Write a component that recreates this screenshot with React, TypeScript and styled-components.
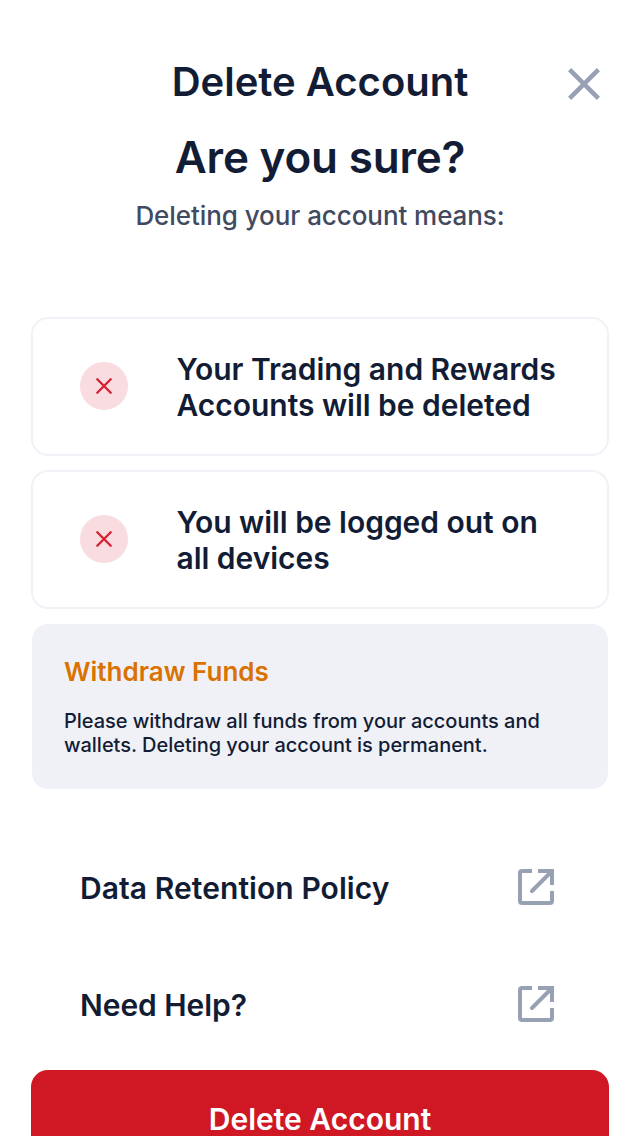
import React from "react";
import styled, { createGlobalStyle } from "styled-components";

const Global = createGlobalStyle`
  * { box-sizing: border-box; }
  body { margin: 0; background: #fff; overflow: hidden; }
`;

const Screen = styled.main`
  width: 640px;
  height: 1136px;
  overflow: hidden;
  padding: 59px 31px 0;
  background: #fff;
  color: #121d35;
  font-family: Inter, sans-serif;
  display: flex;
  flex-direction: column;
  > * { flex-shrink: 0; }
`;

const Header = styled.header`
  display: grid;
  grid-template-columns: 50px 1fr 50px;
  align-items: center;
  height: 46px;
`;

const Title = styled.h1`
  grid-column: 2;
  margin: 0;
  text-align: center;
  font-size: 40px;
  line-height: 46px;
  font-weight: 600;
  white-space: nowrap;
`;

const CloseButton = styled.button`
  border: 0;
  padding: 0;
  background: none;
  width: 32px;
  height: 32px;
  margin: 4px 0 0 9px;
  color: #98a1b3;
  svg { display: block; }
`;

const Question = styled.h2`
  margin: 25px 0 0;
  text-align: center;
  font-size: 44px;
  line-height: 54px;
  font-weight: 600;
  letter-spacing: -0.2px;
`;

const Lead = styled.p`
  margin: 16px 0 0;
  text-align: center;
  font-size: 26px;
  line-height: 32px;
  font-weight: 450;
  letter-spacing: -0.07px;
  color: #414a5f;
`;

const Cards = styled.section`
  margin-top: 85px;
  display: flex;
  flex-direction: column;
  gap: 14px;
`;

const Card = styled.div`
  display: flex;
  align-items: center;
  height: 139px;
  padding: 0 47px;
  gap: 48.5px;
  border: 2px solid #f1f1f7;
  border-radius: 17px;
`;

const Badge = styled.span`
  flex: none;
  display: grid;
  place-items: center;
  width: 48px;
  height: 48px;
  margin-bottom: 1px;
  border-radius: 50%;
  background: #f9dce0;
  color: #d71f32;
`;

const CardText = styled.p`
  margin: 0;
  font-size: 30px;
  line-height: 36px;
  font-weight: 600;
  letter-spacing: -0.03px;
  white-space: nowrap;
`;

const Notice = styled.section`
  margin: 15px 1px 0;
  height: 165px;
  padding: 32px 32px 0;
  border-radius: 16px;
  background: #f0f1f7;
`;

const NoticeTitle = styled.h3`
  margin: 0;
  font-size: 26px;
  line-height: 32px;
  font-weight: 600;
  color: #d97200;
`;

const NoticeText = styled.p`
  margin: 21px 0 0;
  font-size: 20px;
  line-height: 24px;
  font-weight: 500;
  letter-spacing: -0.03px;
  white-space: nowrap;
`;

const Links = styled.nav`
  margin-top: 40px;
  display: flex;
  flex-direction: column;
`;

const LinkRow = styled.a<{ $tracking: number }>`
  display: flex;
  align-items: center;
  justify-content: space-between;
  height: 117px;
  padding: 0 55px 0 49px;
  font-size: 30px;
  font-weight: 600;
  letter-spacing: ${(p) => p.$tracking}px;
  svg { display: block; margin-bottom: 1px; color: #98a1b3; }
`;

const DeleteButton = styled.button`
  margin-top: 7px;
  height: 97px;
  padding: 0;
  border: 0;
  border-radius: 17px;
  background: #d01724;
  color: #fff;
  font: 600 30px/36px Inter, sans-serif;
`;

const CloseIcon = () => (
  <svg width="32" height="32" viewBox="0 0 32 32" fill="none" stroke="currentColor" strokeWidth="4.5">
    <path d="M1.6 1.6L30.4 30.4M30.4 1.6L1.6 30.4" />
  </svg>
);

const CrossIcon = () => (
  <svg width="16" height="16" viewBox="0 0 16 16" fill="none" stroke="currentColor" strokeWidth="2.3" strokeLinecap="round">
    <path d="M1.3 1.3L14.7 14.7M14.7 1.3L1.3 14.7" />
  </svg>
);

const ExternalIcon = () => (
  <svg width="36" height="36" viewBox="0 0 36 36" fill="none" stroke="currentColor" strokeWidth="4">
    <path d="M14 2H4Q2 2 2 4V32Q2 34 4 34H32Q34 34 34 32V22M20 2H34V16" />
    <path d="M33 3L14 22" strokeLinecap="round" />
  </svg>
);

export default function App() {
  return (
    <>
      <Global />
      <Screen>
        <Header>
          <Title>Delete Account</Title>
          <CloseButton aria-label="Close"><CloseIcon /></CloseButton>
        </Header>
        <Question>Are you sure?</Question>
        <Lead>Deleting your account means:</Lead>
        <Cards>
          <Card>
            <Badge><CrossIcon /></Badge>
            <CardText>Your Trading and Rewards<br />Accounts will be deleted</CardText>
          </Card>
          <Card>
            <Badge><CrossIcon /></Badge>
            <CardText>You will be logged out on<br />all devices</CardText>
          </Card>
        </Cards>
        <Notice>
          <NoticeTitle>Withdraw Funds</NoticeTitle>
          <NoticeText>Please withdraw all funds from your accounts and<br />wallets. Deleting your account is permanent.</NoticeText>
        </Notice>
        <Links>
          <LinkRow $tracking={0.07}>Data Retention Policy<ExternalIcon /></LinkRow>
          <LinkRow $tracking={-0.06}>Need Help?<ExternalIcon /></LinkRow>
        </Links>
        <DeleteButton>Delete Account</DeleteButton>
      </Screen>
    </>
  );
}
